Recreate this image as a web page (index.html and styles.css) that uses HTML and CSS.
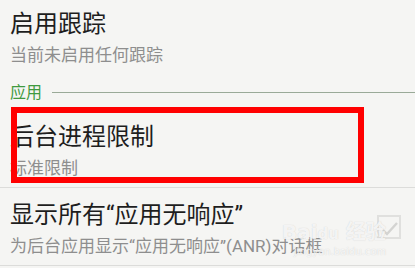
FILE: index.html
```html
<!DOCTYPE html>
<html lang="zh-CN">
<head>
<meta charset="utf-8">
<link rel="stylesheet" href="styles.css">
</head>
<body>
<div class="screen">
  <div class="row first">
    <div class="texts">
      <div class="title">启用跟踪</div>
      <div class="summary">当前未启用任何跟踪</div>
    </div>
  </div>
  <div class="category">
    <span class="cat-label">应用</span>
    <span class="cat-line"></span>
  </div>
  <div class="row bordered">
    <div class="texts">
      <div class="title">后台进程限制</div>
      <div class="summary">标准限制</div>
    </div>
  </div>
  <div class="row bordered">
    <div class="texts">
      <div class="title">显示所有“应用无响应”</div>
      <div class="summary">为后台应用显示“应用无响应”(ANR)对话框</div>
    </div>
    <div class="checkbox">
      <svg width="24" height="24" viewBox="0 0 24 24">
        <rect x="1" y="1" width="22" height="22" fill="none" stroke="#e0e0de" stroke-width="2"/>
        <path d="M6 15 L10 19 L20 8" fill="none" stroke="#d4d4d2" stroke-width="2.4"/>
      </svg>
    </div>
  </div>
  <div class="highlight"></div>
  <div class="watermark">
    <div class="wm-main">Bai<span class="wm-du">du</span> 经验</div>
    <div class="wm-url">jingyan.baidu.com</div>
  </div>
</div>
</body>
</html>
```

FILE: styles.css
```css
html, body {
  margin: 0;
  padding: 0;
  background: #f5f5f3;
}
.screen {
  position: relative;
  width: 415px;
  height: 268px;
  overflow: hidden;
  font-family: Roboto, "Noto Sans CJK SC", sans-serif;
}
.row {
  display: flex;
  align-items: center;
  box-sizing: border-box;
  height: 78px;
  padding: 0 0 0 10px;
}
.row.first {
  margin-top: -3px;
}
.row.bordered {
  border-bottom: 1px solid #dcdcda;
}
.texts {
  flex: 1;
  display: flex;
  flex-direction: column;
  padding-top: 5px;
}
.title {
  font-size: 24px;
  line-height: 26px;
  color: #1e1e1e;
  white-space: nowrap;
}
.summary {
  margin-top: 7px;
  font-size: 17px;
  line-height: 22px;
  color: #8e8e8e;
  white-space: nowrap;
}
.category {
  display: flex;
  align-items: center;
  height: 35px;
  padding-left: 10px;
}
.cat-label {
  font-size: 16px;
  line-height: 20px;
  color: #3f9a3f;
}
.cat-line {
  flex: 1;
  height: 1px;
  margin-left: 10px;
  background: #9aaa98;
}
.checkbox {
  width: 24px;
  height: 24px;
  margin-right: 14px;
}
.highlight {
  position: absolute;
  left: 11px;
  top: 107px;
  width: 353px;
  height: 76px;
  box-sizing: border-box;
  border: 6px solid #ff0000;
}
.watermark {
  position: absolute;
  left: 282px;
  top: 220px;
  font-family: "DejaVu Sans", "Noto Sans CJK SC", sans-serif;
  color: rgba(255, 255, 255, 0.8);
  text-shadow: 0 0 1px rgba(150, 150, 150, 0.45);
}
.wm-main {
  font-size: 20px;
  line-height: 24px;
  font-weight: bold;
}
.wm-du {
  font-size: 15px;
}
.wm-url {
  font-size: 10px;
  line-height: 12px;
  margin-left: 12px;
}
```
